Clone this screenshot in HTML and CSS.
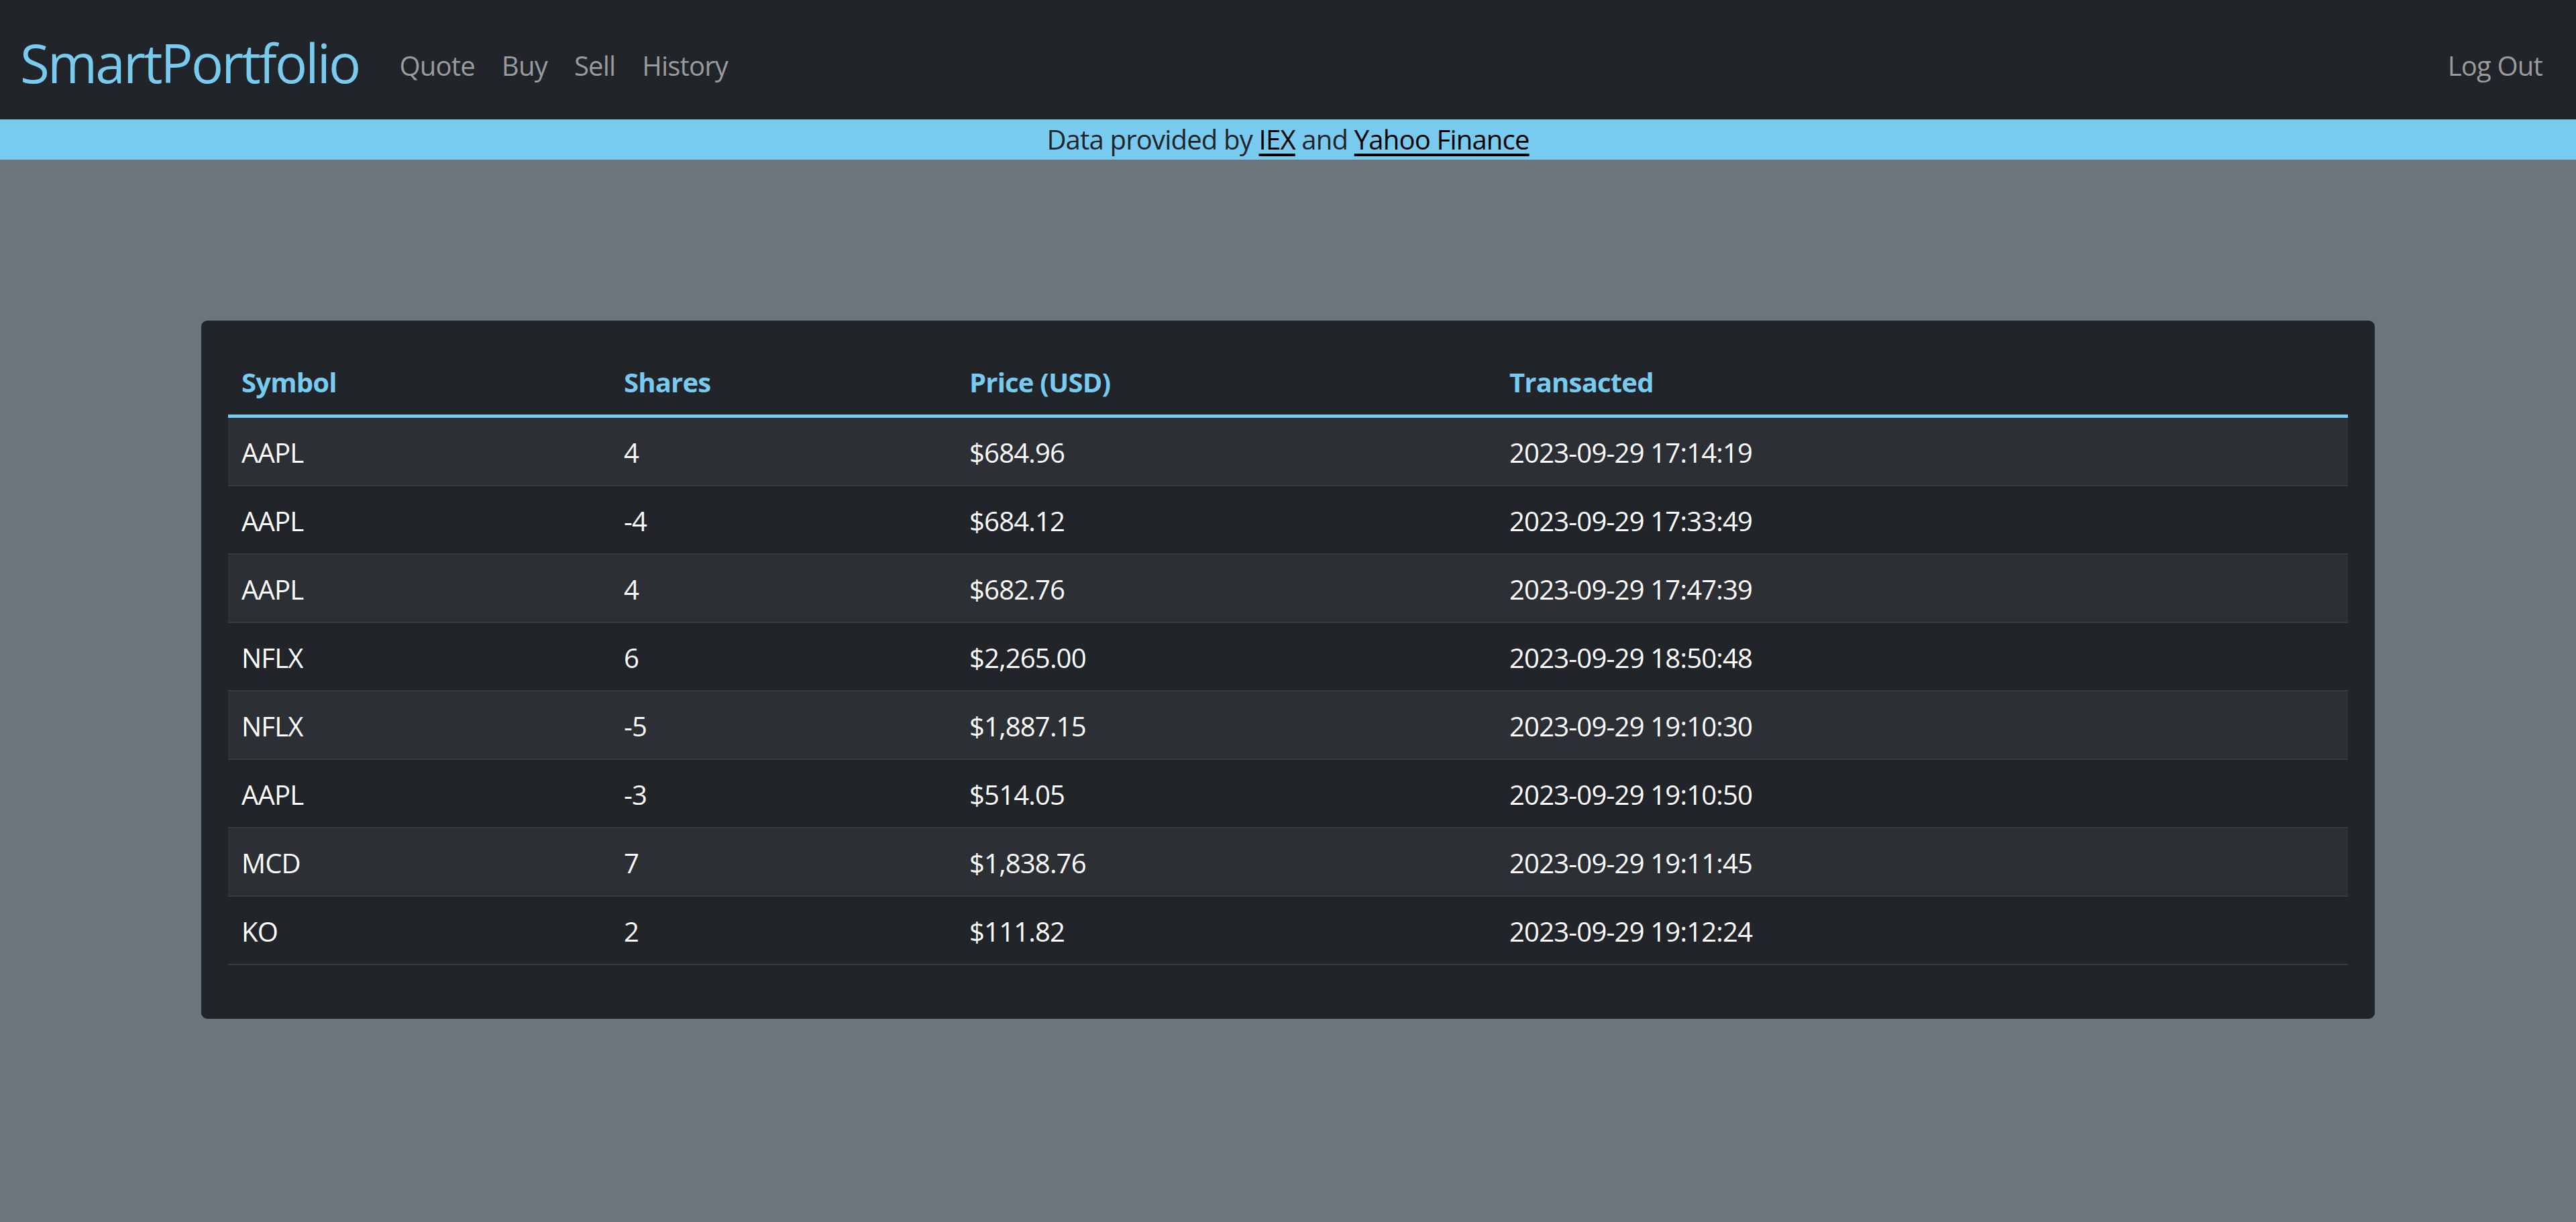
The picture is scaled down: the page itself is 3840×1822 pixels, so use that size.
FILE: index.html
```html
<!DOCTYPE html>
<html lang="en">
<head>
<meta charset="utf-8">
<title>SmartPortfolio: History</title>
<link rel="stylesheet" href="styles.css">
</head>
<body>
<nav class="navbar">
  <a class="brand" href="#">SmartPortfolio</a>
  <ul class="nav">
    <li><a class="nav-link" href="#">Quote</a></li>
    <li><a class="nav-link" href="#">Buy</a></li>
    <li><a class="nav-link" href="#">Sell</a></li>
    <li><a class="nav-link" href="#">History</a></li>
  </ul>
  <ul class="nav nav-right">
    <li><a class="nav-link" href="#">Log Out</a></li>
  </ul>
</nav>
<div class="banner">Data provided by <a href="#">IEX</a> and <a href="#">Yahoo Finance</a></div>
<main class="main">
  <div class="container">
    <div class="card">
      <table class="table">
        <thead>
          <tr>
            <th class="col-symbol">Symbol</th>
            <th class="col-shares">Shares</th>
            <th class="col-price">Price (USD)</th>
            <th>Transacted</th>
          </tr>
        </thead>
        <tbody>
          <tr><td>AAPL</td><td>4</td><td>$684.96</td><td>2023-09-29 17:14:19</td></tr>
          <tr><td>AAPL</td><td>-4</td><td>$684.12</td><td>2023-09-29 17:33:49</td></tr>
          <tr><td>AAPL</td><td>4</td><td>$682.76</td><td>2023-09-29 17:47:39</td></tr>
          <tr><td>NFLX</td><td>6</td><td>$2,265.00</td><td>2023-09-29 18:50:48</td></tr>
          <tr><td>NFLX</td><td>-5</td><td>$1,887.15</td><td>2023-09-29 19:10:30</td></tr>
          <tr><td>AAPL</td><td>-3</td><td>$514.05</td><td>2023-09-29 19:10:50</td></tr>
          <tr><td>MCD</td><td>7</td><td>$1,838.76</td><td>2023-09-29 19:11:45</td></tr>
          <tr><td>KO</td><td>2</td><td>$111.82</td><td>2023-09-29 19:12:24</td></tr>
        </tbody>
      </table>
    </div>
  </div>
</main>
</body>
</html>
```
FILE: styles.css
```css
* { box-sizing: border-box; }
html, body {
  margin: 0;
  padding: 0;
}
body {
  font-family: "Open Sans", "Noto Sans", "Liberation Sans", sans-serif;
  font-size: 40px;
  line-height: 1.5;
  letter-spacing: -0.02em;
  color: #ffffff;
  background: #6c757d;
  min-height: 1822px;
}
a { text-decoration: none; }

.navbar {
  height: 178px;
  background: #212529;
  display: flex;
  align-items: center;
  padding: 0 30px;
}
.brand {
  color: #78caef;
  font-size: 80px;
  line-height: 120px;
  letter-spacing: -0.035em;
  margin-right: 40px;
  margin-top: 8px;
}
.nav {
  list-style: none;
  margin: 18px 0 0;
  padding: 0;
  display: flex;
}
.nav-right { margin-left: auto; }
.nav-link {
  display: block;
  padding: 20px;
  color: #999b9d;
}

.banner {
  background: #78caef;
  color: #212529;
  height: 60px;
  line-height: 60px;
  text-align: center;
}
.banner a {
  color: #000000;
  text-decoration: underline;
  text-decoration-thickness: 4px;
  text-underline-offset: 6px;
}

.main {
  padding-top: 240px;
}
.container {
  width: 3300px;
  margin: 0 auto;
  padding: 0 30px;
}
.card {
  background: #212529;
  border-radius: 9px;
  padding: 40px;
}
.table {
  width: 100%;
  border-collapse: collapse;
  margin-bottom: 40px;
}
.table th,
.table td {
  text-align: left;
  padding: 22px 20px 18px;
  line-height: 60px;
}
.table th {
  color: #78caef;
  font-weight: 700;
}
.table thead tr {
  border-bottom: 5px solid #78caef;
}
.table tbody tr {
  border-bottom: 2.5px solid #373b3e;
}
.table tbody tr:nth-child(odd) {
  background: #2c3034;
}
.col-symbol { width: 570px; }
.col-shares { width: 515px; }
.col-price { width: 805px; }
```
